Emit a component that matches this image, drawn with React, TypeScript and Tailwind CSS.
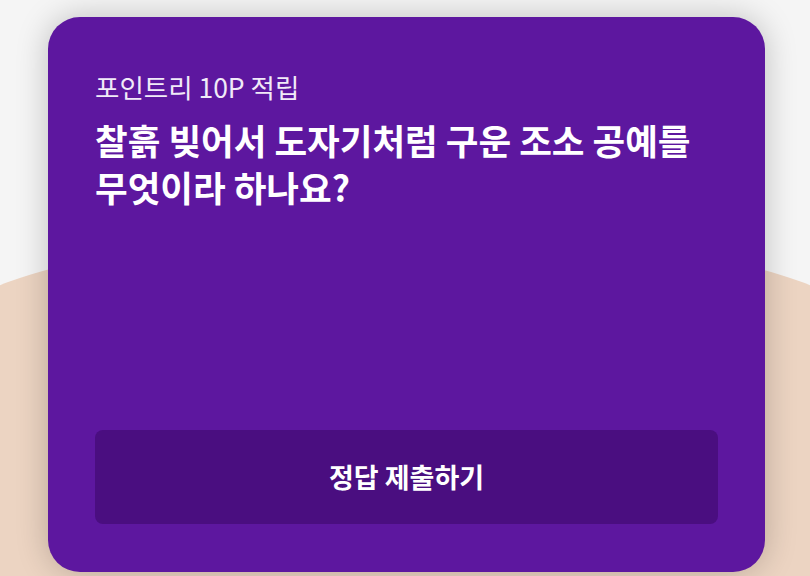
export default function App() {
  return (
    <div
      className="relative h-[576px] w-[810px] overflow-hidden bg-[#f5f5f5]"
      style={{ fontFamily: '"Noto Sans CJK KR", "Noto Sans", sans-serif' }}
    >
      {/* peach backdrop behind the card */}
      <div className="absolute left-[-45px] top-[234px] h-[600px] w-[900px] rounded-[450px_/_91px] bg-[#ecd4c2]" />

      <div className="relative px-[48px] pt-[17px]">
        <div className="flex h-[555px] w-[717px] flex-col rounded-[32px] bg-[#5d179f] px-[47px] pb-[48px] pt-[53px] shadow-[0_0_32px_rgba(0,0,0,0.22)]">
          <p className="text-[26.5px] leading-[34px] text-[#f1eaf8]">포인트리 10P 적립</p>
          <h1 className="mt-[12px] text-[35.5px] font-bold leading-[47px] text-white">
            찰흙 빚어서 도자기처럼 구운 조소 공예를
            <br />
            무엇이라 하나요?
          </h1>
          <button className="mt-auto flex h-[94px] w-full items-center justify-center rounded-[8px] bg-[#4a0e80] text-[27px] font-bold text-white">
            정답 제출하기
          </button>
        </div>
      </div>
    </div>
  );
}
